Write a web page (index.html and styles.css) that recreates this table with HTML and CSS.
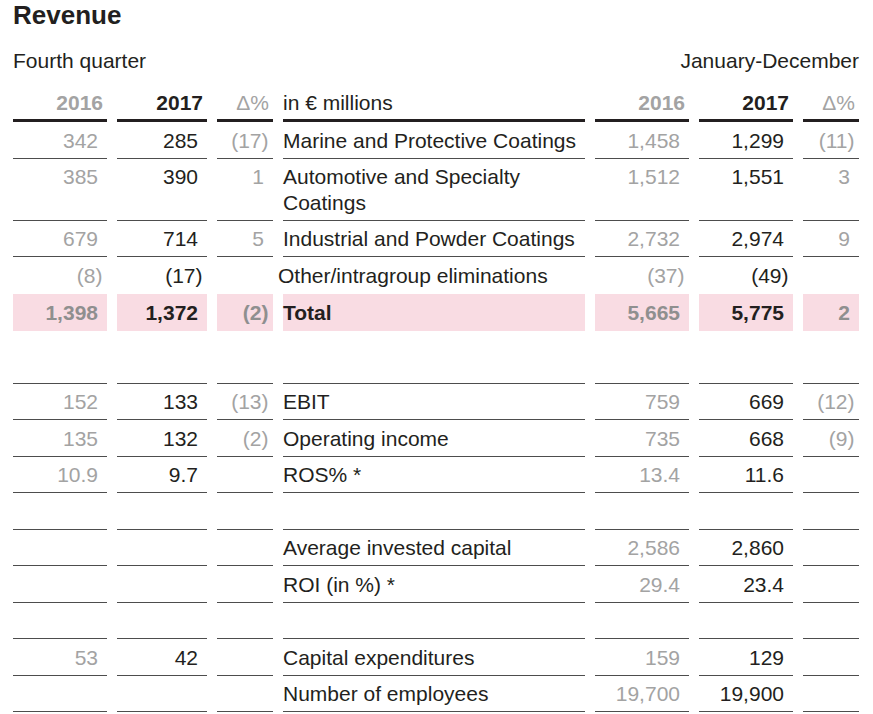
FILE: index.html
```html
<!DOCTYPE html>
<html lang="en">
<head>
<meta charset="utf-8">
<title>Revenue</title>
<link rel="stylesheet" href="styles.css">
</head>
<body>
<div class="page">
  <h1 class="title">Revenue</h1>
  <div class="periods">
    <span>Fourth quarter</span>
    <span>January-December</span>
  </div>
  <div class="table">
    <!-- header -->
    <div class="h g b">2016</div>
    <div class="h b">2017</div>
    <div class="h g">&Delta;%</div>
    <div class="h l">in &euro; millions</div>
    <div class="h g b">2016</div>
    <div class="h b">2017</div>
    <div class="h g">&Delta;%</div>

    <div class="c n g">342</div>
    <div class="c n">285</div>
    <div class="c n g neg">(17)</div>
    <div class="c l">Marine and Protective Coatings</div>
    <div class="c n g">1,458</div>
    <div class="c n">1,299</div>
    <div class="c n g neg">(11)</div>

    <div class="c n g">385</div>
    <div class="c n">390</div>
    <div class="c n g">1</div>
    <div class="c l">Automotive and Specialty<br>Coatings</div>
    <div class="c n g">1,512</div>
    <div class="c n">1,551</div>
    <div class="c n g">3</div>

    <div class="c n g">679</div>
    <div class="c n">714</div>
    <div class="c n g">5</div>
    <div class="c l">Industrial and Powder Coatings</div>
    <div class="c n g">2,732</div>
    <div class="c n">2,974</div>
    <div class="c n g">9</div>

    <div class="c nb n g neg">(8)</div>
    <div class="c nb n neg">(17)</div>
    <div class="c nb n g"></div>
    <div class="c nb l shift">Other/intragroup eliminations</div>
    <div class="c nb n g neg">(37)</div>
    <div class="c nb n neg">(49)</div>
    <div class="c nb n g"></div>

    <div class="c nb pk n gb">1,398</div>
    <div class="c nb pk n b">1,372</div>
    <div class="c nb pk n gb neg">(2)</div>
    <div class="c nb pk l b">Total</div>
    <div class="c nb pk n gb">5,665</div>
    <div class="c nb pk n b">5,775</div>
    <div class="c nb pk n gb">2</div>

    <div class="c sp"></div><div class="c sp"></div><div class="c sp"></div><div class="c sp"></div><div class="c sp"></div><div class="c sp"></div><div class="c sp"></div>

    <div class="c n g">152</div>
    <div class="c n">133</div>
    <div class="c n g neg">(13)</div>
    <div class="c l">EBIT</div>
    <div class="c n g">759</div>
    <div class="c n">669</div>
    <div class="c n g neg">(12)</div>

    <div class="c n g">135</div>
    <div class="c n">132</div>
    <div class="c n g neg">(2)</div>
    <div class="c l">Operating income</div>
    <div class="c n g">735</div>
    <div class="c n">668</div>
    <div class="c n g neg">(9)</div>

    <div class="c n g">10.9</div>
    <div class="c n">9.7</div>
    <div class="c n g"></div>
    <div class="c l">ROS% *</div>
    <div class="c n g">13.4</div>
    <div class="c n">11.6</div>
    <div class="c n g"></div>

    <div class="c"></div><div class="c"></div><div class="c"></div><div class="c"></div><div class="c"></div><div class="c"></div><div class="c"></div>

    <div class="c n g"></div>
    <div class="c n"></div>
    <div class="c n g"></div>
    <div class="c l">Average invested capital</div>
    <div class="c n g">2,586</div>
    <div class="c n">2,860</div>
    <div class="c n g"></div>

    <div class="c n g"></div>
    <div class="c n"></div>
    <div class="c n g"></div>
    <div class="c l">ROI (in %) *</div>
    <div class="c n g">29.4</div>
    <div class="c n">23.4</div>
    <div class="c n g"></div>

    <div class="c"></div><div class="c"></div><div class="c"></div><div class="c"></div><div class="c"></div><div class="c"></div><div class="c"></div>

    <div class="c n g">53</div>
    <div class="c n">42</div>
    <div class="c n g"></div>
    <div class="c l">Capital expenditures</div>
    <div class="c n g">159</div>
    <div class="c n">129</div>
    <div class="c n g"></div>

    <div class="c n g"></div>
    <div class="c n"></div>
    <div class="c n g"></div>
    <div class="c l">Number of employees</div>
    <div class="c n g">19,700</div>
    <div class="c n">19,900</div>
    <div class="c n g"></div>
  </div>
</div>
</body>
</html>
```

FILE: styles.css
```css
html, body {
  margin: 0;
  padding: 0;
  background: #ffffff;
}

body {
  font-family: "Liberation Sans", Arial, sans-serif;
  color: #231f20;
}

.page {
  padding: 0 0 0 13px;
  width: 846px;
}

.title {
  margin: 0;
  font-size: 26px;
  line-height: 30px;
  font-weight: bold;
  color: #231f20;
}

.periods {
  display: flex;
  justify-content: space-between;
  margin-top: 18px;
  font-size: 21px;
  line-height: 26px;
}

.table {
  display: grid;
  grid-template-columns: 94px 90px 56px 302px 94px 94px 56px;
  column-gap: 10px;
  margin-top: 19px;
  font-size: 21px;
}

.h {
  line-height: 20px;
  text-align: right;
  padding: 0 4px 6px 0;
  border-bottom: 3px solid #231f20;
}

.h.l {
  text-align: left;
  padding: 0 0 6px 0;
}

.b {
  font-weight: bold;
}

.c {
  line-height: 25.5px;
  min-height: 25.5px;
  padding: 5.5px 0 4.5px;
  border-bottom: 1px solid #4d4d4d;
}

.c.nb {
  border-bottom-color: transparent;
}

.n {
  text-align: right;
  padding-right: 9px;
}

.n.neg {
  padding-right: 4.5px;
}

.l {
  text-align: left;
}

.shift {
  margin-left: -5px;
}

.g {
  color: #a3a3a3;
}

.gb {
  color: #8f8f8f;
  font-weight: bold;
}

.pk {
  background: #f9dce3;
  padding-top: 6px;
  padding-bottom: 4.5px;
}

.sp {
  padding: 0;
  min-height: 0;
  height: 52px;
}
```
